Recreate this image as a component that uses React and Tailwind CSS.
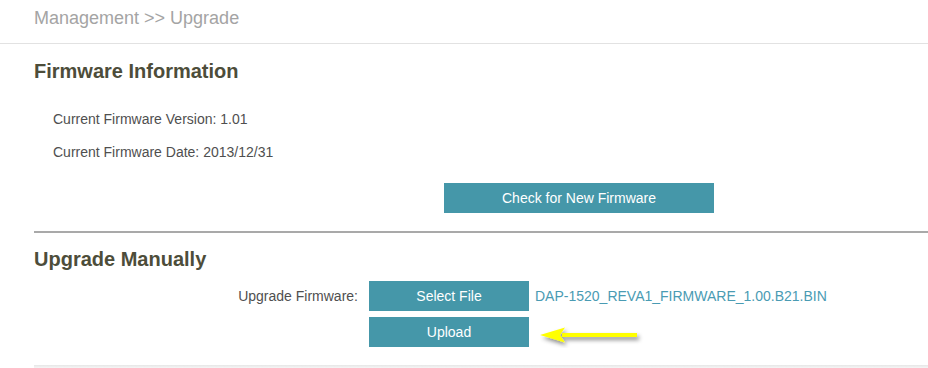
import React from "react";

function Arrow() {
  return (
    <svg width="106" height="22" viewBox="0 0 106 22" className="ml-[11px] mt-[15px]">
      <defs>
        <filter id="sh" x="-20%" y="-50%" width="140%" height="200%">
          <feDropShadow dx="2" dy="3" stdDeviation="2" floodColor="#000" floodOpacity="0.45" />
        </filter>
      </defs>
      <g filter="url(#sh)">
        <rect x="22" y="7" width="75" height="4" fill="#ffff00" />
        <path d="M0 9 L25 1.5 L20 9 L25 16.5 Z" fill="#ffff00" />
      </g>
    </svg>
  );
}

function App() {
  const font = { fontFamily: '"Liberation Sans", Arial, sans-serif' };
  return (
    <div className="w-[928px] h-[368px] bg-white overflow-hidden" style={font}>
      <div className="h-[44px] pl-[34px] pt-[7px] border-b border-[#e2e2e2] text-[18px] leading-[22px] text-[#a4a4a4]">
        Management &gt;&gt; Upgrade
      </div>

      <div className="pl-[34px]">
        <h2 className="mt-[15px] text-[20px] leading-[24px] font-bold text-[#4d4d3a]">
          Firmware Information
        </h2>
        <div className="pl-[19px] pt-[28px] text-[14px] text-[#4f4f4f]">
          <div className="leading-[16px]">Current Firmware Version: 1.01</div>
          <div className="leading-[16px] mt-[17px]">Current Firmware Date: 2013/12/31</div>
        </div>
        <div className="pl-[410px] pt-[23px]">
          <button className="w-[270px] h-[30px] bg-[#4597a9] text-white text-[14px]">
            Check for New Firmware
          </button>
        </div>
        <div className="mt-[18px] border-t-2 border-[#a9a9a9]" />

        <h2 className="mt-[14px] text-[20px] leading-[24px] font-bold text-[#4d4d3a]">
          Upgrade Manually
        </h2>
        <div className="flex mt-[10px]">
          <div className="w-[335px] text-right pr-[11px] text-[14px] text-[#4f4f4f] leading-[30px]">
            Upgrade Firmware:
          </div>
          <div className="flex flex-col gap-[6px]">
            <button className="w-[160px] h-[30px] bg-[#4597a9] text-white text-[14px]">Select File</button>
            <button className="w-[160px] h-[30px] bg-[#4597a9] text-white text-[14px]">Upload</button>
          </div>
          <div className="flex flex-col">
            <div className="pl-[6px] text-[14px] leading-[30px] text-[#4a9bb3]">
              DAP-1520_REVA1_FIRMWARE_1.00.B21.BIN
            </div>
            <Arrow />
          </div>
        </div>
        <div className="mt-[17px] h-[3px] bg-gradient-to-b from-[#e6e6e6] to-[#f6f6f6]" />
      </div>
    </div>
  );
}

export default App;
